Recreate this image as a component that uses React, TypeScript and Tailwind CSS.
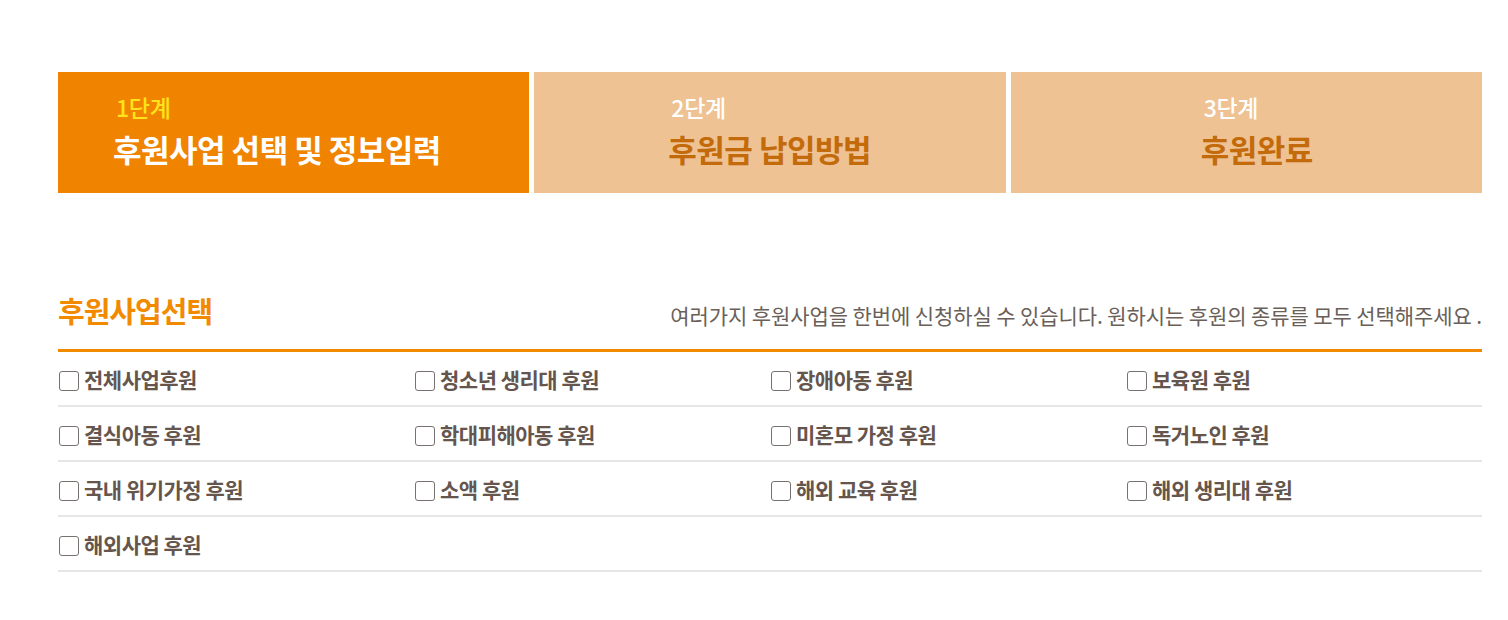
const steps = [
  { no: '1단계', title: '후원사업 선택 및 정보입력', active: true, pad: 'pl-[55px]' },
  { no: '2단계', title: '후원금 납입방법', active: false, pad: 'pl-[134px]' },
  { no: '3단계', title: '후원완료', active: false, pad: 'pl-[190px]' },
];

const items = [
  '전체사업후원',
  '청소년 생리대 후원',
  '장애아동 후원',
  '보육원 후원',
  '결식아동 후원',
  '학대피해아동 후원',
  '미혼모 가정 후원',
  '독거노인 후원',
  '국내 위기가정 후원',
  '소액 후원',
  '해외 교육 후원',
  '해외 생리대 후원',
  '해외사업 후원',
];

function Checkbox() {
  return <span className="block mt-[4px] w-[20px] h-[20px] border-[1.5px] border-[#777270] rounded-[3px] bg-white shrink-0" />;
}

export default function App() {
  const rows: string[][] = [];
  for (let i = 0; i < items.length; i += 4) rows.push(items.slice(i, i + 4));

  return (
    <div className="w-[1508px] h-[620px] bg-white font-['Noto_Sans_CJK_KR','Noto_Sans',sans-serif]">
      <div className="pt-[72px] pl-[58px] pr-[26px]">
        {/* Steps */}
        <div className="grid grid-cols-3 gap-[5px] h-[121px]">
          {steps.map((s) => (
            <div
              key={s.no}
              className={`min-w-0 flex flex-col ${s.pad} pt-[22px] ${s.active ? 'bg-[#f08300]' : 'bg-[#eec293]'}`}
            >
              <span
                className={`pl-[3px] text-[23px] leading-[26px] font-medium tracking-[-0.3px] ${
                  s.active ? 'text-[#ffe31a]' : 'text-white'
                }`}
              >
                {s.no}
              </span>
              <span
                className={`mt-[11px] text-[31px] leading-[36px] font-bold tracking-[-0.5px] whitespace-nowrap ${
                  s.active ? 'text-white' : 'text-[#c36a0b]'
                }`}
              >
                {s.title}
              </span>
            </div>
          ))}
        </div>

        {/* Section header */}
        <div className="mt-[100px] flex items-end justify-between pb-[20px] border-b-[3px] border-[#f28a00]">
          <h2 className="mb-[2px] text-[29px] leading-[34px] font-bold text-[#f28a00] tracking-[-1px]">후원사업선택</h2>
          <p className="text-[21px] leading-[28px] text-[#6b5f59] tracking-[-0.1px] whitespace-nowrap">
            여러가지 후원사업을 한번에 신청하실 수 있습니다. 원하시는 후원의 종류를 모두 선택해주세요 .
          </p>
        </div>

        {/* Checkbox rows */}
        <div>
          {rows.map((row, ri) => (
            <div key={ri} className="grid grid-cols-4 h-[55px] items-center border-b-2 border-[#e6e6e6]">
              {row.map((label) => (
                <label key={label} className="flex items-center gap-[5px] pl-[1px]">
                  <Checkbox />
                  <span className="text-[21px] leading-[28px] font-bold text-[#65554d] tracking-[-0.5px]">{label}</span>
                </label>
              ))}
            </div>
          ))}
        </div>
      </div>
    </div>
  );
}
